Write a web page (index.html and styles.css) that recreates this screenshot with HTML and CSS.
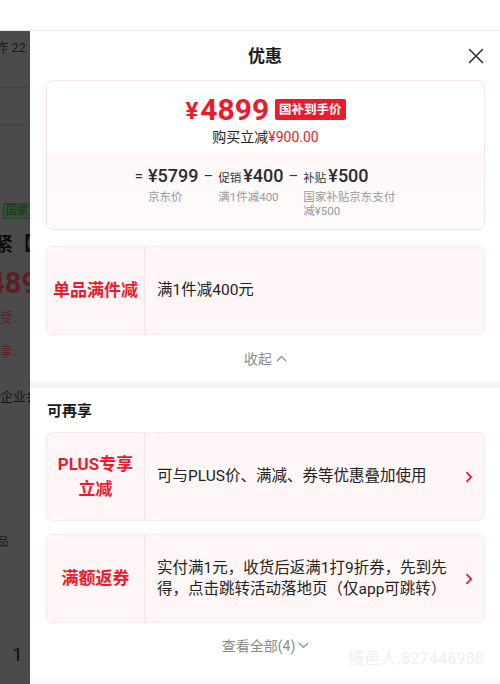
FILE: index.html
```html
<!DOCTYPE html>
<html lang="zh-CN">
<head>
<meta charset="utf-8">
<title>优惠</title>
<link rel="stylesheet" href="styles.css">
</head>
<body>
<div class="topbar"></div>
<div class="stage">
  <aside class="behind">
    <div class="b-time">昨 22</div>
    <div class="b-box"></div>
    <div class="b-tags"><span class="b-red"></span><span class="b-green">国家</span></div>
    <div class="b-title">紧【</div>
    <div class="b-price">489</div>
    <div class="b-line b-red-text b-l1">受:</div>
    <div class="b-line b-red-text b-l2">享:</div>
    <div class="b-line b-l3">企业会</div>
    <div class="b-small">品</div>
    <div class="b-num">1</div>
  </aside>

  <section class="sheet">
    <header class="sheet-head">
      <h2 class="sheet-title">优惠</h2>
      <span class="close">
        <svg width="16" height="16" viewBox="0 0 16 16"><path d="M1.5 1.5 L14.5 14.5 M14.5 1.5 L1.5 14.5" stroke="#333" stroke-width="1.6" fill="none" stroke-linecap="round"/></svg>
      </span>
    </header>

    <div class="sheet-body">
      <div class="price-card">
        <div class="pc-top">
          <div class="pc-price"><span class="yen">¥</span><span class="num">4899</span><span class="tag">国补到手价</span></div>
          <div class="pc-save">购买立减<span class="red">¥900.00</span></div>
          <span class="notch"></span>
        </div>
        <div class="pc-bottom">
          <div class="formula">
            <span class="op">=</span>
            <div class="term">
              <div class="val">¥5799</div>
              <div class="lbl">京东价</div>
            </div>
            <span class="op">–</span>
            <div class="term">
              <div class="val"><small>促销</small>¥400</div>
              <div class="lbl">满1件减400</div>
            </div>
            <span class="op">–</span>
            <div class="term">
              <div class="val"><small>补贴</small>¥500</div>
              <div class="lbl lbl-wide">国家补贴京东支付减¥500</div>
            </div>
          </div>
        </div>
      </div>

      <div class="promo promo-first">
        <div class="promo-name">单品满件减</div>
        <div class="promo-desc">满1件减400元</div>
      </div>

      <div class="toggle toggle-up">收起
        <svg width="11" height="7" viewBox="0 0 11 7"><path d="M1 6 L5.5 1.5 L10 6" stroke="#8a8a8a" stroke-width="1.2" fill="none"/></svg>
      </div>
    </div>

    <div class="band"></div>

    <div class="sheet-body">
      <h3 class="section-title">可再享</h3>

      <div class="promo">
        <div class="promo-name">PLUS专享<br>立减</div>
        <div class="promo-desc">可与PLUS价、满减、券等优惠叠加使用</div>
        <span class="arrow"><svg width="8" height="12" viewBox="0 0 8 12"><path d="M1.5 1.2 L6.2 6 L1.5 10.8" stroke="#e0263f" stroke-width="1.9" fill="none"/></svg></span>
      </div>

      <div class="promo promo-gap">
        <div class="promo-name">满额返券</div>
        <div class="promo-desc">实付满1元，收货后返满1打9折券，先到先得，点击跳转活动落地页（仅app可跳转）</div>
        <span class="arrow"><svg width="8" height="12" viewBox="0 0 8 12"><path d="M1.5 1.2 L6.2 6 L1.5 10.8" stroke="#e0263f" stroke-width="1.9" fill="none"/></svg></span>
      </div>

      <div class="toggle toggle-down">查看全部(4)
        <svg width="11" height="7" viewBox="0 0 11 7"><path d="M1 1 L5.5 5.5 L10 1" stroke="#8a8a8a" stroke-width="1.2" fill="none"/></svg>
      </div>
    </div>

    <div class="watermark">慢邑人.827446980</div>
    <div class="bottom-shade"></div>
  </section>
</div>
</body>
</html>
```

FILE: styles.css
```css
* { box-sizing: border-box; }
html, body { margin: 0; padding: 0; }
body {
  width: 500px;
  height: 684px;
  overflow: hidden;
  background: #fff;
  font-family: Roboto, "Noto Sans CJK SC", sans-serif;
  color: #222;
}

.topbar {
  height: 31px;
  background: #fff;
  border-bottom: 1px solid #ebebeb;
}

.stage {
  display: flex;
  height: 653px;
}

/* dimmed page behind the sheet */
.behind {
  width: 30px;
  flex: none;
  background: #4b4b4b;
  overflow: hidden;
  white-space: nowrap;
  color: #141414;
}
.b-time {
  margin-top: 8px;
  height: 18px;
  line-height: 18px;
  font-size: 13px;
  margin-left: -5px;
  color: #1c1c1c;
}
.b-box {
  margin-top: 30px;
  height: 39px;
  border-top: 1px solid #613636;
  border-bottom: 1px solid #613636;
}
.b-tags {
  margin-top: 77px;
  height: 16px;
  display: flex;
  gap: 3px;
}
.b-red {
  width: 4px;
  height: 16px;
  background: #6a2326;
}
.b-green {
  height: 16px;
  padding: 0 2px;
  border: 1px solid #24432a;
  background: #34503a;
  color: #1a331d;
  font-size: 11px;
  line-height: 14px;
}
.b-title {
  margin-top: 14px;
  height: 24px;
  line-height: 24px;
  font-size: 19px;
  font-weight: 700;
  margin-left: -6px;
  color: #0d0d0d;
}
.b-price {
  margin-top: 10px;
  height: 32px;
  line-height: 32px;
  font-size: 29px;
  font-weight: 700;
  margin-left: -12px;
  color: #5a1f23;
}
.b-line {
  height: 18px;
  line-height: 18px;
  font-size: 13px;
}
.b-red-text { color: #5a1f23; }
.b-l1 { margin-top: 10px; }
.b-l2 { margin-top: 16px; }
.b-l3 { margin-top: 27px; color: #151515; }
.b-small {
  margin-top: 128px;
  height: 16px;
  line-height: 16px;
  font-size: 12px;
  margin-left: -3px;
  color: #1c1c1c;
}
.b-num {
  margin-top: 94px;
  height: 22px;
  line-height: 22px;
  font-size: 19px;
  padding-left: 12px;
  color: #111;
}

/* sheet */
.sheet {
  position: relative;
  flex: 1;
  background: #fff;
  overflow: hidden;
}
.sheet-head {
  height: 49px;
  display: flex;
  align-items: center;
  justify-content: center;
  position: relative;
}
.sheet-title {
  margin: 0;
  font-size: 17px;
  font-weight: 700;
  color: #1a1a1a;
  line-height: 24px;
}
.close {
  position: absolute;
  right: 16px;
  top: 17px;
  width: 16px;
  height: 16px;
  display: block;
}
.close svg { display: block; }

.sheet-body {
  padding: 0 15px 0 16px;
}

.price-card {
  border: 1px solid #f7e3e6;
  border-radius: 7px;
  overflow: hidden;
}
.pc-top {
  position: relative;
  padding: 10px 0 5px;
  text-align: center;
  background: #fff;
}
.pc-price {
  height: 36px;
  display: flex;
  align-items: center;
  justify-content: center;
  color: #ee1a2c;
  font-weight: 700;
}
.yen {
  font-size: 24px;
  margin-top: 4px;
  margin-right: 2px;
}
.num {
  font-size: 30px;
  letter-spacing: 0;
}
.tag {
  margin-left: 6px;
  height: 21px;
  line-height: 21px;
  padding: 0 4px;
  background: #ee1a2c;
  color: #fff;
  font-size: 12.5px;
  font-weight: 700;
  border-radius: 2px;
}
.pc-save {
  height: 20px;
  line-height: 20px;
  font-size: 14px;
  color: #222;
}
.red { color: #ee1a2c; }
.notch {
  position: absolute;
  left: 222px;
  bottom: -1px;
  width: 0;
  height: 0;
  border-left: 4px solid transparent;
  border-right: 4px solid transparent;
  border-bottom: 4px solid #fdf7f8;
}
.pc-bottom {
  padding: 12px 0 11px;
  background: linear-gradient(#fdf7f8, #fefbfb);
}
.formula {
  display: flex;
  justify-content: center;
  align-items: flex-start;
  gap: 5px;
}
.op {
  height: 24px;
  line-height: 24px;
  font-size: 15px;
  color: #333;
}
.term { display: flex; flex-direction: column; }
.val {
  height: 24px;
  line-height: 24px;
  font-size: 18px;
  font-weight: 500;
  color: #2b2b2b;
  white-space: nowrap;
}
.val small {
  font-size: 11.5px;
  font-weight: 400;
  margin-right: 2px;
  color: #333;
}
.lbl {
  margin-top: 2px;
  font-size: 11.5px;
  line-height: 14px;
  color: #999;
}
.lbl-wide { width: 93px; }

.promo {
  display: flex;
  align-items: stretch;
  min-height: 89px;
  border: 1px solid #f9e7ea;
  border-radius: 7px;
  background: #fef6f7;
}
.promo-first { margin-top: 16px; }
.promo-gap { margin-top: 13px; }
.promo-name {
  width: 98px;
  flex: none;
  display: flex;
  align-items: center;
  justify-content: center;
  text-align: center;
  border-right: 1px solid #f7e2e5;
  color: #ee1a2c;
  font-size: 17px;
  font-weight: 700;
  line-height: 25px;
}
.promo-desc {
  flex: 1;
  display: flex;
  align-items: center;
  padding-left: 12px;
  font-size: 15.5px;
  line-height: 21px;
  color: #222;
}
.arrow {
  width: 30px;
  flex: none;
  display: flex;
  align-items: center;
  justify-content: flex-start;
  padding-left: 11px;
}
.arrow svg { display: block; }

.toggle {
  height: 46px;
  display: flex;
  align-items: center;
  justify-content: center;
  gap: 4px;
  font-size: 14px;
  color: #8a8a8a;
}
.toggle svg { display: block; }
.toggle-down {
  height: 22px;
  margin-top: 11px;
  gap: 3px;
}

.band {
  height: 7px;
  background: #f6f6f8;
}
.section-title {
  margin: 12px 0 0 1px;
  height: 22px;
  line-height: 22px;
  font-size: 15px;
  font-weight: 700;
  color: #1a1a1a;
}
.section-title + .promo { margin-top: 10px; }

.watermark {
  position: absolute;
  right: 16px;
  bottom: 15px;
  font-size: 16px;
  color: #efefef;
  letter-spacing: 0.2px;
}
.bottom-shade {
  position: absolute;
  left: 0;
  right: 0;
  bottom: 0;
  height: 10px;
  background: linear-gradient(rgba(0,0,0,0), rgba(0,0,0,0.035));
}
```
